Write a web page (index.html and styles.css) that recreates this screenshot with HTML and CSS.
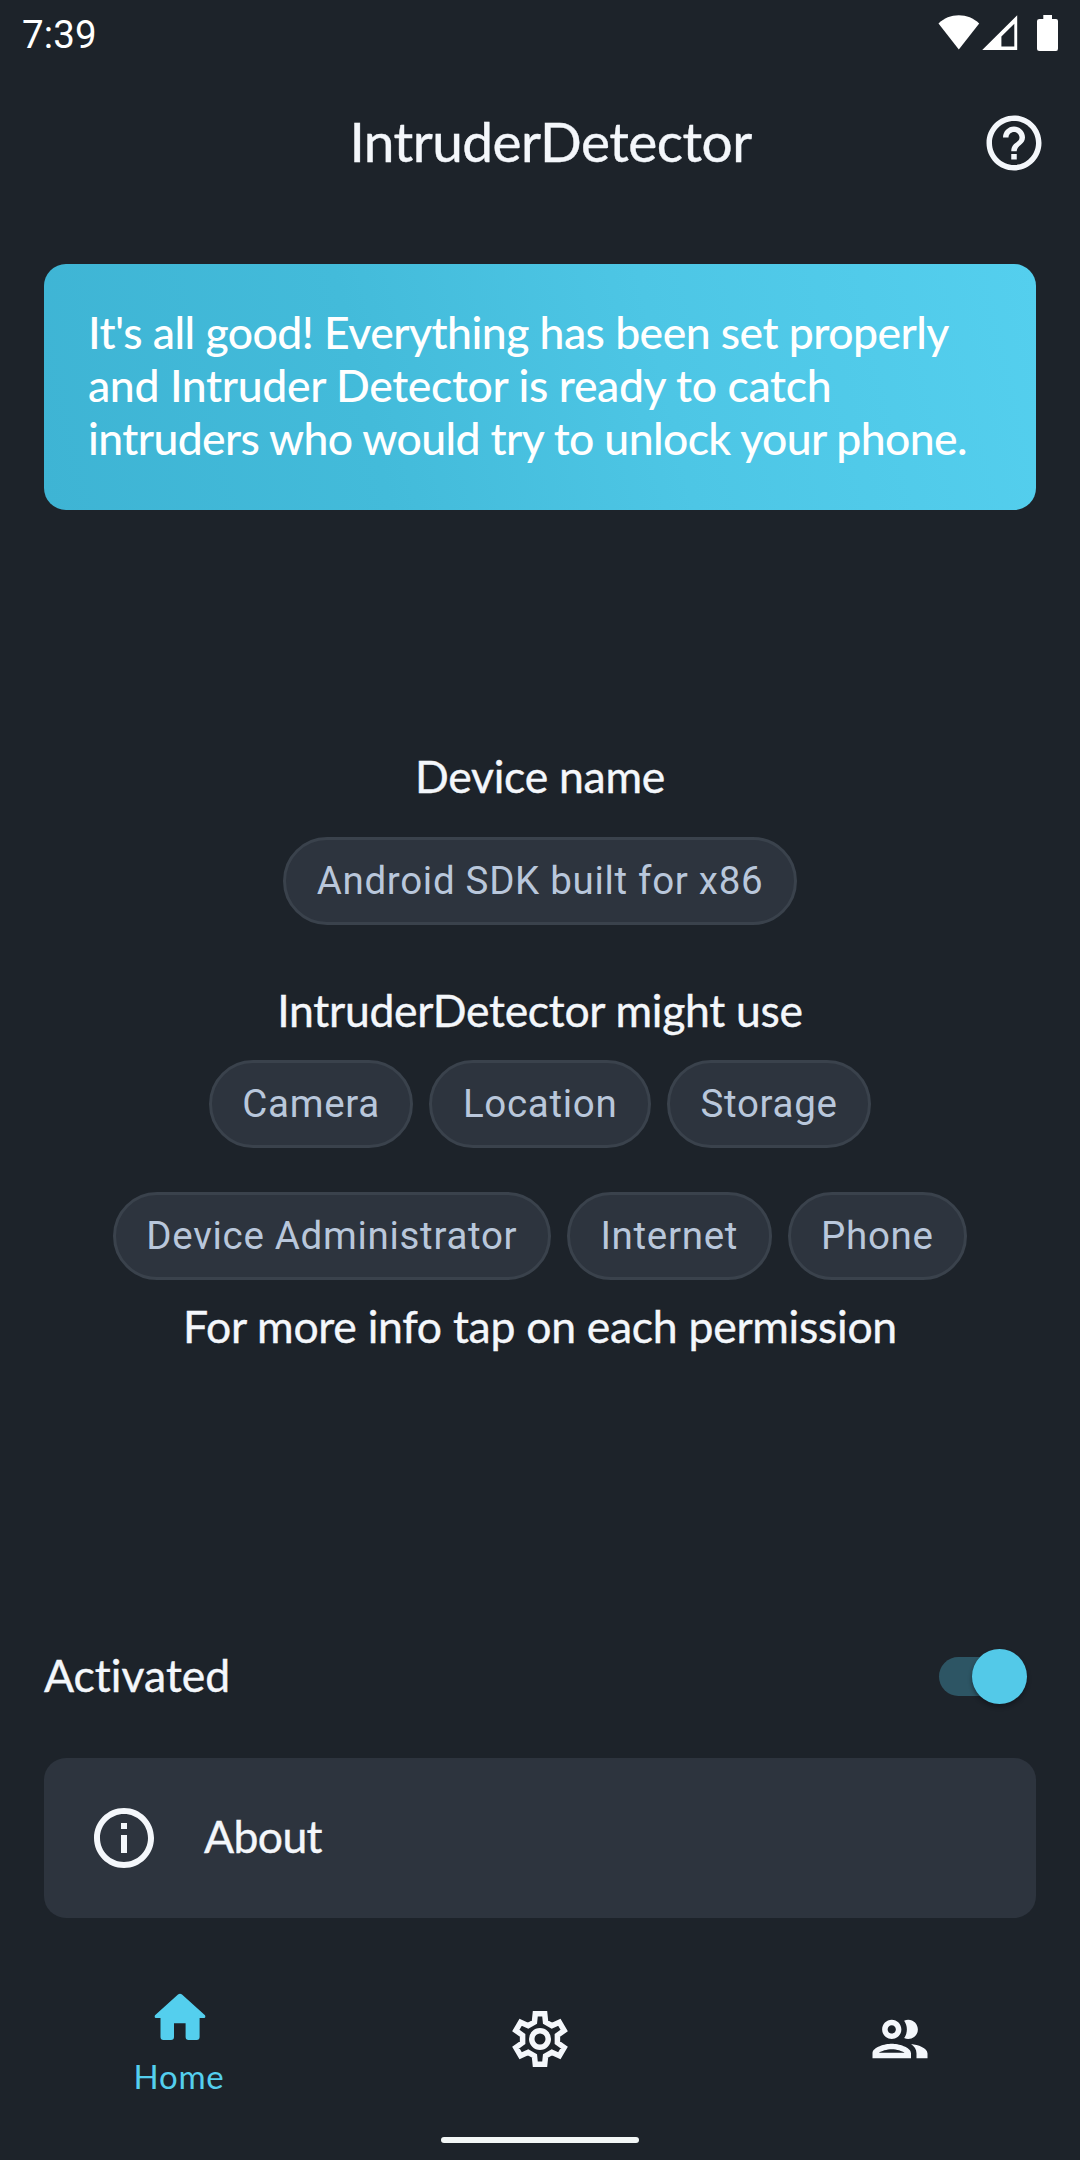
FILE: index.html
```
<!DOCTYPE html>
<html lang="en">
<head>
<meta charset="utf-8">
<title>IntruderDetector</title>
<link rel="stylesheet" href="styles.css">
</head>
<body>
<div class="screen">
  <div class="status-bar">
    <span class="clock">7:39</span>
    <svg class="status-icons" viewBox="0 0 122 38" aria-hidden="true">
      <path d="M0.5 9.5C6 4 13 1.2 20.8 1.2S35.500 4 41.200 9.500L20.800 35.500z"/>
      <path fill-rule="evenodd" d="M79.200 1.200V36H44.200zM76.300 9.800L63.400 22.500V32.500H76.300z"/>
      <path d="M105.300 1H114V5H118Q120 5 120 7V34.500Q120 37 118 37H101.500Q99 37 99 34.500V7Q99 5 101.500 5H105.300z"/>
    </svg>
  </div>

  <header class="app-bar">
    <h1 class="title">IntruderDetector</h1>
    <svg class="help" viewBox="0 0 24 24" aria-label="Help"><path d="M11 18h2v-2h-2v2zm1-16C6.480 2 2 6.480 2 12s4.480 10 10 10 10-4.480 10-10S17.520 2 12 2zm0 18c-4.410 0-8-3.590-8-8s3.590-8 8-8 8 3.590 8 8-3.590 8-8 8zm0-14c-2.210 0-4 1.790-4 4h2c0-1.100.9-2 2-2s2 .9 2 2c0 2-3 1.750-3 5h2c0-2.250 3-2.500 3-5 0-2.210-1.790-4-4-4z"/></svg>
  </header>

  <section class="banner">
    <span class="line-1">It's all good! Everything has been set properly</span><br>
    <span class="line-2">and Intruder Detector is ready to catch</span><br>
    <span class="line-3">intruders who would try to unlock your phone.</span>
  </section>

  <main class="details">
    <h2 class="label">Device name</h2>
    <div class="chips device"><span class="chip">Android SDK built for x86</span></div>
    <h2 class="label">IntruderDetector might use</h2>
    <div class="chips permissions">
      <span class="chip">Camera</span><span class="chip">Location</span><span class="chip">Storage</span>
    </div>
    <div class="chips special">
      <span class="chip">Device Administrator</span><span class="chip">Internet</span><span class="chip">Phone</span>
    </div>
    <p class="label">For more info tap on each permission</p>
  </main>

  <div class="activation">
    <span class="activation-label">Activated</span>
    <div class="switch"><div class="thumb"></div></div>
  </div>

  <section class="about">
    <svg class="info" viewBox="0 0 24 24" aria-hidden="true"><path d="M11 7h2v2h-2zm0 4h2v6h-2zm1-9C6.480 2 2 6.480 2 12s4.480 10 10 10 10-4.480 10-10S17.520 2 12 2zm0 18c-4.410 0-8-3.590-8-8s3.590-8 8-8 8 3.590 8 8-3.590 8-8 8z"/></svg>
    <span class="about-label">About</span>
  </section>

  <nav class="tabs">
    <a class="tab active">
      <svg class="home" viewBox="0 0 54 48" aria-hidden="true"><path d="M25 1.500Q27 0 29 1.500L52 22.200Q53 24.800 51 25H46.600V44Q46.600 47 43.600 47H35.600Q32.600 47 32.600 44V30.200H21V44Q21 47 18 47H10.500Q7.500 47 7.500 44V25H3Q1 24.800 2 22.200z"/></svg>
      <span class="tab-label">Home</span>
    </a>
    <a class="tab">
      <svg class="gear" viewBox="-33 -33 66 66" aria-label="Settings">
        <path d="M-4.700-25.200L4.700-25.200L5.560-16.900L11.860-13.270L19.400-16.700L24.200-8.500L17.400-3.640V3.640L24.200 8.500L19.400 16.700L11.860 13.270L5.560 16.900L4.700 25.200H-4.700L-5.560 16.900L-11.860 13.270L-19.400 16.700L-24.200 8.500L-17.400 3.640V-3.640L-24.200-8.500L-19.400-16.700L-11.860-13.270L-5.560-16.900z"/>
        <circle r="8.250"/>
      </svg>
    </a>
    <a class="tab">
      <svg class="people" viewBox="0 0 24 24" aria-label="People"><path d="M9 13.750c-2.340 0-7 1.170-7 3.500V19h14v-1.750c0-2.330-4.660-3.500-7-3.500zM4.340 17c.84-.58 2.870-1.250 4.660-1.250s3.820.67 4.660 1.250H4.340zM9 12c1.930 0 3.500-1.570 3.500-3.500S10.930 5 9 5 5.500 6.570 5.500 8.500 7.070 12 9 12zm0-5c.83 0 1.500.67 1.500 1.500S9.830 10 9 10s-1.500-.67-1.500-1.500S8.170 7 9 7zm7.040 6.810c1.160.84 1.960 1.960 1.960 3.440V19h4v-1.750c0-2.020-3.500-3.170-5.960-3.440zM15 12c1.930 0 3.500-1.570 3.500-3.500S16.930 5 15 5c-.54 0-1.040.13-1.500.35.63.89 1 1.980 1 3.150s-.37 2.260-1 3.150c.46.22.96.35 1.500.35z"/></svg>
    </a>
  </nav>
  <div class="gesture-bar"></div>
</div>
</body>
</html>
```
FILE: styles.css
```
* { box-sizing: border-box; }

body {
  margin: 0;
  background: #1d232a;
  color: #f4f7fb;
  font-family: Lato, "Open Sans", sans-serif;
}

.screen {
  display: flex;
  flex-direction: column;
  width: 1080px;
  height: 2160px;
  overflow: hidden;
}

svg { display: block; fill: currentColor; }

.status-bar {
  display: flex;
  justify-content: space-between;
  height: 66px;
  padding: 14px 20px 0 22px;
  color: #fff;
}

.clock { font: 38.5px/42px Roboto, sans-serif; letter-spacing: 0.15px; }
.status-icons { width: 122px; height: 38px; }

.app-bar {
  display: grid;
  grid-template-columns: 1fr auto 1fr;
  align-items: center;
  height: 154px;
  padding: 0 33px 0 54px;
}

.title {
  grid-column: 2;
  margin: 0;
  padding-bottom: 5px;
  font-size: 55px;
  line-height: 66px;
  font-weight: 400;
  letter-spacing: -0.55px;
  -webkit-text-stroke: 0.4px;
}

.help { justify-self: end; width: 66px; height: 66px; }

.banner {
  height: 246px;
  margin: 44px 44px 0;
  padding: 41px 0 0 44px;
  border-radius: 22px;
  background: linear-gradient(76.6deg, #3eb4d4, #43bbda 33%, #4dc6e5 62%, #54cfee);
  color: #fff;
  font-size: 44.5px;
  line-height: 53px;
  font-weight: 500;
  white-space: nowrap;
}

.line-1 { letter-spacing: -0.53px; }
.line-2 { letter-spacing: -0.36px; }
.line-3 { letter-spacing: -0.61px; }

.details {
  display: flex;
  flex-direction: column;
  height: 1138px;
  padding-top: 239px;
}

.label {
  margin: 0;
  font-size: 44.5px;
  line-height: 53px;
  font-weight: 400;
  letter-spacing: -0.28px;
  text-align: center;
  -webkit-text-stroke: 0.4px;
}

.chips { display: flex; justify-content: center; gap: 16px; }
.device { margin: 35px 0 58px; }
.permissions { margin-top: 24px; }
.special { margin: 44px 0 19px; }

.chip {
  height: 88px;
  padding: 0 30.5px;
  border: 3px solid #3a424c;
  border-radius: 44px;
  background: #2d343e;
  color: #b9c7db;
  font: 38.5px/82px Roboto, sans-serif;
  letter-spacing: 0.7px;
  white-space: nowrap;
}

.activation {
  display: flex;
  justify-content: space-between;
  height: 110px;
  padding: 0 53px 0 44px;
}

.activation-label {
  font-size: 44.5px;
  line-height: 53px;
  letter-spacing: 0.03px;
  -webkit-text-stroke: 0.4px;
}

.switch {
  display: flex;
  align-items: center;
  justify-content: flex-end;
  width: 88px;
  height: 39px;
  margin-top: 9px;
  border-radius: 20px;
  background: linear-gradient(90deg, #2d5564 65px, transparent 65px);
}

.thumb {
  flex: none;
  width: 55.500px;
  height: 55.500px;
  border-radius: 50%;
  background: #53c9e8;
  box-shadow: 0 3px 4px rgba(10, 12, 18, 0.45);
}

.about {
  display: flex;
  align-items: center;
  gap: 44px;
  height: 160px;
  margin: 0 44px;
  padding-left: 44px;
  border-radius: 22px;
  background: #2d343e;
}

.info { width: 72px; height: 72px; }

.about-label {
  padding-bottom: 5px;
  font-size: 44.5px;
  line-height: 53px;
  letter-spacing: -0.6px;
  -webkit-text-stroke: 0.4px;
}

.tabs {
  display: grid;
  grid-template-columns: repeat(3, 1fr);
  height: 219px;
  padding: 0 0 60px;
}

.tab {
  display: flex;
  flex-direction: column;
  align-items: center;
  padding-top: 88px;
}

.active { padding-top: 75px; color: #54cfee; }
.home { width: 54px; height: 48px; }
.gear, .people { width: 66px; height: 66px; }
.gear { fill: none; stroke: currentColor; stroke-width: 5.500px; }

.tab-label {
  margin-top: 15px;
  padding-right: 2px;
  font-size: 33px;
  line-height: 40px;
  letter-spacing: 0.82px;
}

.gesture-bar {
  width: 198px;
  height: 6px;
  margin: 0 auto;
  border-radius: 3px;
  background: #f3f7f7;
}
```
